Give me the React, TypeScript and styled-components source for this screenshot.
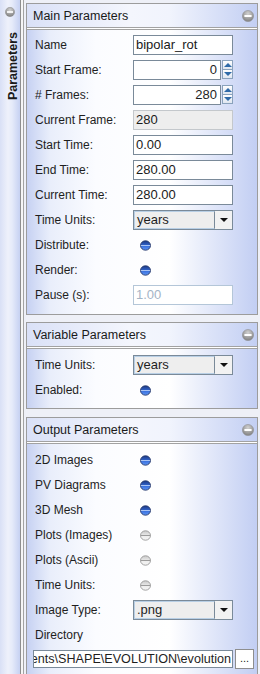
import React from "react";
import styled, { createGlobalStyle } from "styled-components";

const GlobalStyle = createGlobalStyle`
  html, body {
    margin: 0;
    padding: 0;
  }
  body {
    font-family: "Liberation Sans", Arial, sans-serif;
    font-size: 12px;
    color: #1e1e1e;
    background: #eef0f7;
  }
`;

function MinusIcon({ size }: { size: number }) {
  return (
    <svg width={size} height={size} viewBox="0 0 12 12">
      <defs>
        <radialGradient id="minusGrad" cx="0.5" cy="0.3" r="0.75">
          <stop offset="0" stopColor="#d2d2d2" />
          <stop offset="1" stopColor="#7a7a7a" />
        </radialGradient>
      </defs>
      <circle cx="6" cy="6" r="5.6" fill="url(#minusGrad)" stroke="#8a8a8a" strokeWidth="0.5" />
      <rect x="2.4" y="5" width="7.2" height="2" fill="#ffffff" />
    </svg>
  );
}

function Ball({ on }: { on: boolean }) {
  return (
    <svg width="11" height="11" viewBox="0 0 11 11">
      <defs>
        <linearGradient id="ballOn" x1="0" y1="0" x2="0" y2="1">
          <stop offset="0" stopColor="#1c3a85" />
          <stop offset="0.44" stopColor="#2f5fc4" />
          <stop offset="0.5" stopColor="#a9c4f4" />
          <stop offset="0.56" stopColor="#3a70dc" />
          <stop offset="1" stopColor="#5d95f6" />
        </linearGradient>
        <linearGradient id="ballOff" x1="0" y1="0" x2="0" y2="1">
          <stop offset="0" stopColor="#c9c9c9" />
          <stop offset="0.44" stopColor="#e6e6e6" />
          <stop offset="0.5" stopColor="#9c9c9c" />
          <stop offset="0.56" stopColor="#eeeeee" />
          <stop offset="1" stopColor="#f4f4f4" />
        </linearGradient>
      </defs>
      <ellipse
        cx="5.5"
        cy="5.5"
        rx="5"
        ry="4.7"
        fill={on ? "url(#ballOn)" : "url(#ballOff)"}
        stroke={on ? "#27396a" : "#9a9a9a"}
        strokeWidth="0.9"
      />
    </svg>
  );
}

function Spinner({ value }: { value: string }) {
  return (
    <SpinBox>
      <SpinField>{value}</SpinField>
      <SpinButtons>
        <SpinButton $dir="up" />
        <SpinButton $dir="down" />
      </SpinButtons>
    </SpinBox>
  );
}

function Combo({ value }: { value: string }) {
  return (
    <ComboBox>
      <ComboText>{value}</ComboText>
      <ComboArrow />
    </ComboBox>
  );
}

function App() {
  return (
    <>
      <GlobalStyle />
      <Frame>
        <Sidebar>
          <SideIcon>
            <MinusIcon size={10} />
          </SideIcon>
          <SideTitle>Parameters</SideTitle>
        </Sidebar>
        <Divider />
        <Content>
          <Section>
            <Header>
              <span>Main Parameters</span>
              <MinusIcon size={12} />
            </Header>
            <Body $top={5} $bottom={9}>
              <Label>Name</Label>
              <Field>bipolar_rot</Field>
              <Label>Start Frame:</Label>
              <Spinner value="0" />
              <Label># Frames:</Label>
              <Spinner value="280" />
              <Label>Current Frame:</Label>
              <Field $readOnly>280</Field>
              <Label>Start Time:</Label>
              <Field>0.00</Field>
              <Label>End Time:</Label>
              <Field>280.00</Field>
              <Label>Current Time:</Label>
              <Field>280.00</Field>
              <Label>Time Units:</Label>
              <Combo value="years" />
              <Label>Distribute:</Label>
              <BallCell>
                <Ball on />
              </BallCell>
              <Label>Render:</Label>
              <BallCell>
                <Ball on />
              </BallCell>
              <Label>Pause (s):</Label>
              <Field $disabled>1.00</Field>
            </Body>
          </Section>

          <Section $gap={7}>
            <Header>
              <span>Variable Parameters</span>
              <MinusIcon size={12} />
            </Header>
            <Body $top={6} $bottom={8}>
              <Label>Time Units:</Label>
              <Combo value="years" />
              <Label>Enabled:</Label>
              <BallCell>
                <Ball on />
              </BallCell>
            </Body>
          </Section>

          <Section $gap={8}>
            <Header>
              <span>Output Parameters</span>
              <MinusIcon size={12} />
            </Header>
            <Body $top={6} $bottom={4}>
              <Label>2D Images</Label>
              <BallCell>
                <Ball on />
              </BallCell>
              <Label>PV Diagrams</Label>
              <BallCell>
                <Ball on />
              </BallCell>
              <Label>3D Mesh</Label>
              <BallCell>
                <Ball on />
              </BallCell>
              <Label>Plots (Images)</Label>
              <BallCell>
                <Ball on={false} />
              </BallCell>
              <Label>Plots (Ascii)</Label>
              <BallCell>
                <Ball on={false} />
              </BallCell>
              <Label>Time Units:</Label>
              <BallCell>
                <Ball on={false} />
              </BallCell>
              <Label>Image Type:</Label>
              <Combo value=".png" />
              <Label>Directory</Label>
              <span />
              <DirRow>
                <DirField>
                  <span>{"C:\\Users\\Documents\\SHAPE\\EVOLUTION\\evolution"}</span>
                </DirField>
                <BrowseButton>...</BrowseButton>
              </DirRow>
            </Body>
          </Section>
        </Content>
      </Frame>
    </>
  );
}

const Frame = styled.div`
  display: flex;
  width: 260px;
  height: 674px;
  overflow: hidden;
`;

const Sidebar = styled.div`
  width: 20px;
  flex-shrink: 0;
  display: flex;
  flex-direction: column;
  align-items: flex-start;
  background: linear-gradient(to right, #d9e0f6 0%, #eef1fb 40%, #e6ebfa 60%, #c6d1f2 100%);
`;

const SideIcon = styled.div`
  display: flex;
  margin: 7px 0 0 5px;
`;

const SideTitle = styled.div`
  margin: 15px 0 0 6px;
  width: 14px;
  line-height: 14px;
  writing-mode: vertical-rl;
  transform: rotate(180deg);
  font-weight: bold;
  font-size: 12.5px;
  color: #1a1a1a;
  white-space: nowrap;
`;

const Divider = styled.div`
  width: 2px;
  flex-shrink: 0;
  border-left: 1px solid #8e8e8e;
  border-right: 1px solid #a2a2a2;
  background: #f6f6f6;
`;

const Content = styled.div`
  flex: 1;
  padding: 3px 2px 0 2px;
  background: #eef0f7;
`;

const Section = styled.div<{ $gap?: number }>`
  margin-top: ${(p) => p.$gap ?? 0}px;
  border: 1px solid #9c9c9c;
  background: #ffffff;
`;

const Header = styled.div`
  height: 23px;
  display: flex;
  align-items: center;
  justify-content: space-between;
  padding: 0 3px 0 6px;
  border-bottom: 1px solid #a2a2a2;
  background: linear-gradient(to right, #dae1f7 0%, #f4f6fd 45%, #f1f4fd 62%, #c3cff3 100%);
  color: #1a1a1a;
  font-size: 12.5px;
`;

const Body = styled.div<{ $top: number; $bottom: number }>`
  margin-top: 1px;
  border-top: 1px solid #a2a2a2;
  display: grid;
  grid-template-columns: 98px 100px;
  grid-auto-rows: 20px;
  row-gap: 5px;
  align-items: center;
  padding: ${(p) => p.$top}px 0 ${(p) => p.$bottom}px 8px;
  background: linear-gradient(to right, #c6d1f2 0%, #e9eefb 10%, #fbfcff 30%, #ffffff 62%, #c2cef3 100%);
`;

const Label = styled.div`
  white-space: nowrap;
  color: #1e1e1e;
`;

const Field = styled.div<{ $readOnly?: boolean; $disabled?: boolean }>`
  box-sizing: border-box;
  height: 20px;
  line-height: 18px;
  padding: 0 2px;
  font-size: 13px;
  border: 1px solid ${(p) => (p.$disabled ? "#b4c6d8" : p.$readOnly ? "#c4c8cc" : "#7a8a99")};
  background: ${(p) => (p.$readOnly ? "#eeeeee" : "#ffffff")};
  color: ${(p) => (p.$disabled ? "#a4b4c6" : "#1a1a1a")};
  white-space: nowrap;
  overflow: hidden;
`;

const SpinBox = styled.div`
  display: flex;
  height: 20px;
`;

const SpinField = styled.div`
  box-sizing: border-box;
  width: 88px;
  height: 20px;
  line-height: 18px;
  padding: 0 3px;
  font-size: 13px;
  text-align: right;
  border: 1px solid #7a8a99;
  background: #ffffff;
`;

const SpinButtons = styled.div`
  display: flex;
  flex-direction: column;
  width: 11px;
  margin: 0 0 0 1px;
  height: 19px;
`;

const SpinButton = styled.div<{ $dir: "up" | "down" }>`
  flex: 1;
  box-sizing: border-box;
  border: 1px solid #8aa2bc;
  ${(p) => (p.$dir === "down" ? "border-top: none;" : "")}
  background: linear-gradient(#ffffff, #dfe6f0);
  display: flex;
  align-items: center;
  justify-content: center;
  &::after {
    content: "";
    border-left: 4px solid transparent;
    border-right: 4px solid transparent;
    ${(p) =>
      p.$dir === "up"
        ? "border-bottom: 4px solid #2f6aa8;"
        : "border-top: 4px solid #2f6aa8;"}
  }
`;

const ComboBox = styled.div`
  box-sizing: border-box;
  display: flex;
  height: 20px;
  border: 1px solid #7a8a99;
  background: #eeeeee;
  font-size: 13px;
`;

const ComboText = styled.div`
  flex: 1;
  box-sizing: border-box;
  line-height: 16px;
  padding: 0 2px;
  border: 1px solid #b8cfe5;
  border-right: 1px solid #7a8a99;
`;

const ComboArrow = styled.div`
  width: 17px;
  display: flex;
  align-items: center;
  justify-content: center;
  background: #f2f2f2;
  &::after {
    content: "";
    border-left: 4px solid transparent;
    border-right: 4px solid transparent;
    border-top: 4px solid #111111;
  }
`;

const BallCell = styled.div`
  display: flex;
  align-items: center;
  padding-left: 7px;
`;

const DirRow = styled.div`
  grid-column: 1 / -1;
  display: flex;
  align-items: center;
  gap: 2px;
  width: 221px;
  margin: -3px 0 0 -2px;
`;

const DirField = styled.div`
  box-sizing: border-box;
  width: 200px;
  height: 18px;
  display: flex;
  justify-content: flex-end;
  align-items: center;
  padding-right: 1px;
  font-size: 12.6px;
  border: 1px solid #7a8a99;
  background: #ffffff;
  overflow: hidden;
  white-space: nowrap;
`;

const BrowseButton = styled.div`
  box-sizing: border-box;
  width: 19px;
  height: 20px;
  line-height: 16px;
  text-align: center;
  border: 1px solid #8e8e8e;
  background: #ffffff;
  font-size: 11px;
`;

export default App;
